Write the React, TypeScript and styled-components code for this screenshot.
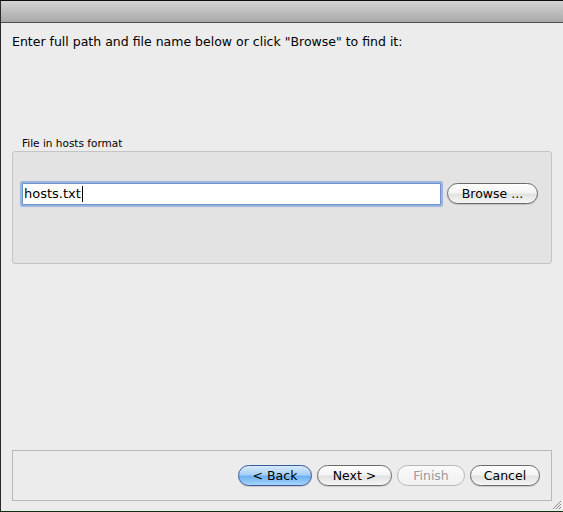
import React from "react";
import styled, { createGlobalStyle, css } from "styled-components";

const Global = createGlobalStyle`
  html, body { margin: 0; padding: 0; background: #0b1a0b; }
  body { font-family: "DejaVu Sans", "Liberation Sans", sans-serif; }
  * { box-sizing: border-box; }
`;

const Window = styled.div`
  width: 563px;
  height: 512px;
  display: flex;
  flex-direction: column;
  background: #ececec;
  border-top: 1px solid #0d0d0d;
  border-left: 1px solid #2a2a2a;
  border-bottom: 1px solid #10300f;
  overflow: hidden;
`;

const TitleBar = styled.div`
  height: 22px;
  flex: none;
  background: linear-gradient(#d4d4d4, #a9a9a9);
  border-bottom: 1px solid #4f4f4f;
`;

const Body = styled.div`
  flex: 1;
  display: flex;
  flex-direction: column;
  padding: 0 11px 10px 11px;
  position: relative;
`;

const Instruction = styled.p`
  margin: 11px 0 0 0;
  font-size: 12.5px;
  line-height: 16px;
  color: #000;
`;

const GroupLabel = styled.div`
  margin: 87px 0 0 10px;
  font-size: 10.5px;
  line-height: 13px;
  color: #000;
`;

const GroupBox = styled.div`
  height: 113px;
  margin-top: 1px;
  background: #e3e3e3;
  border: 1px solid #c4c4c4;
  border-radius: 3px;
  padding: 31px 13px 0 9px;
  display: flex;
  align-items: flex-start;
  gap: 6px;
`;

const PathInput = styled.div`
  flex: 1;
  height: 22px;
  background: #fff;
  border: 1px solid #6f93cc;
  box-shadow: 0 0 0 2px rgba(128, 166, 222, 0.75);
  border-radius: 1px;
  font-size: 13px;
  line-height: 20px;
  padding-left: 1px;
  color: #000;
  display: flex;
  align-items: center;
`;

const Caret = styled.span`
  display: inline-block;
  width: 1px;
  height: 16px;
  background: #000;
  margin-left: 1px;
`;

const Spacer = styled.div`
  flex: 1;
`;

const ButtonPanel = styled.div`
  height: 51px;
  border: 1px solid #b9b9b9;
  display: flex;
  align-items: center;
  justify-content: flex-end;
  gap: 5px;
  padding-right: 11px;
`;

const AquaButton = styled.button<{ $w: number; $primary?: boolean; $disabled?: boolean }>`
  width: ${(p) => p.$w}px;
  height: 21px;
  padding: 0;
  border-radius: 11px;
  font-family: "DejaVu Sans", "Liberation Sans", sans-serif;
  font-size: 12.5px;
  line-height: 19px;
  color: #000;
  border: 1px solid #6a6a6a;
  background: linear-gradient(#ffffff 0%, #f4f4f4 45%, #e2e2e2 55%, #f6f6f6 100%);
  box-shadow: 0 1px 1px rgba(0, 0, 0, 0.15);
  cursor: default;
  ${(p) =>
    p.$primary &&
    css`
      border-color: #3a5a9e;
      background: linear-gradient(#d6e9fb 0%, #a8d0f6 45%, #6fb1ef 55%, #a6d5fb 100%);
    `}
  ${(p) =>
    p.$disabled &&
    css`
      color: #9a9a9a;
      border-color: #b7b7b7;
      box-shadow: none;
      background: linear-gradient(#fafafa, #f0f0f0);
    `}
`;

const Grip = styled.svg`
  position: absolute;
  right: 1px;
  bottom: 1px;
`;

export default function App() {
  return (
    <>
      <Global />
      <Window>
        <TitleBar />
        <Body>
          <Instruction>Enter full path and file name below or click "Browse" to find it:</Instruction>
          <GroupLabel>File in hosts format</GroupLabel>
          <GroupBox>
            <PathInput>
              hosts.txt
              <Caret />
            </PathInput>
            <AquaButton $w={91}>Browse ...</AquaButton>
          </GroupBox>
          <Spacer />
          <ButtonPanel>
            <AquaButton $w={74} $primary>
              &lt; Back
            </AquaButton>
            <AquaButton $w={75}>Next &gt;</AquaButton>
            <AquaButton $w={68} $disabled>
              Finish
            </AquaButton>
            <AquaButton $w={70}>Cancel</AquaButton>
          </ButtonPanel>
          <Grip width="11" height="11" viewBox="0 0 11 11">
            <path d="M10 2 L2 10 M10 5 L5 10 M10 8 L8 10" stroke="#8a8a8a" strokeWidth="1" />
          </Grip>
        </Body>
      </Window>
    </>
  );
}
